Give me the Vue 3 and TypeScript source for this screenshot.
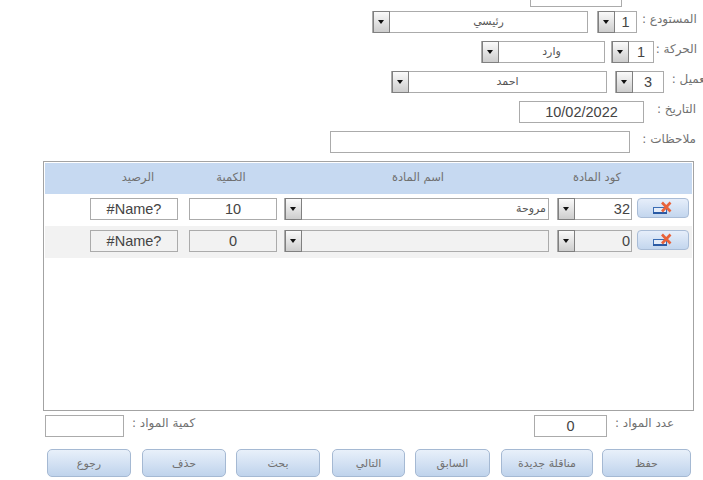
<script setup lang="ts">
interface Line {
  code: string
  name: string
  qty: string
  balance: string
}

const lines: Line[] = [
  { code: '32', name: 'مروحة', qty: '10', balance: '#Name?' },
  { code: '0', name: '', qty: '0', balance: '#Name?' }
]

// gap is the space to the previous button, they are not evenly placed
const buttons = [
  { text: 'رجوع', width: 84, gap: 0 },
  { text: 'حذف', width: 84, gap: 11 },
  { text: 'بحث', width: 84, gap: 10 },
  { text: 'التالي', width: 73, gap: 12 },
  { text: 'السابق', width: 75, gap: 10 },
  { text: 'مناقلة جديدة', width: 92, gap: 11 },
  { text: 'حفظ', width: 89, gap: 9 }
]
</script>

<template>
  <div class="page">
    <div class="row row-top">
      <div class="field top-field"></div>
    </div>

    <div class="row row-store">
      <div class="combo store-name">
        <span class="arrow"></span>
        <span class="combo-text center">رئيسي</span>
      </div>
      <div class="combo store-id">
        <span class="arrow"></span>
        <span class="combo-text center">1</span>
      </div>
      <span class="label store-label">المستودع :</span>
    </div>

    <div class="row row-move">
      <div class="combo move-name">
        <span class="arrow"></span>
        <span class="combo-text center">وارد</span>
      </div>
      <div class="combo move-id">
        <span class="arrow"></span>
        <span class="combo-text center">1</span>
      </div>
      <span class="label move-label">الحركة :</span>
    </div>

    <div class="row row-client">
      <div class="combo client-name">
        <span class="arrow"></span>
        <span class="combo-text center">احمد</span>
      </div>
      <div class="combo client-id">
        <span class="arrow"></span>
        <span class="combo-text center">3</span>
      </div>
      <span class="label client-label">العميل :</span>
    </div>

    <div class="row row-date">
      <div class="field date-field">10/02/2022</div>
      <span class="label date-label">التاريخ :</span>
    </div>

    <div class="row row-notes">
      <div class="field notes-field"></div>
      <span class="label notes-label">ملاحظات :</span>
    </div>

    <div class="table-box">
      <div class="table-head">
        <span class="col-balance">الرصيد</span>
        <span class="col-qty">الكمية</span>
        <span class="col-name">اسم المادة</span>
        <span class="col-code">كود المادة</span>
      </div>
      <div v-for="(line, i) in lines" :key="i" class="table-row" :class="{ alt: i === 1 }">
        <div class="field cell-balance">{{ line.balance }}</div>
        <div class="field cell-qty">{{ line.qty }}</div>
        <div class="combo cell-name">
          <span class="arrow"></span>
          <span class="combo-text name-text">{{ line.name }}</span>
        </div>
        <div class="combo cell-code">
          <span class="arrow"></span>
          <span class="combo-text code-text">{{ line.code }}</span>
        </div>
        <button class="del-btn" type="button" aria-label="delete">
          <svg width="20" height="14" viewBox="0 0 20 14">
            <rect x="0.5" y="6.5" width="13" height="6" fill="#e4ecf8" stroke="#3a6cb4" />
            <rect x="0" y="11" width="14" height="2" fill="#2a5aa4" />
            <path d="M9 1.5 L17.5 10.5 M17.5 1.5 L9 10.5" stroke="#e8623a" stroke-width="2.6" />
          </svg>
        </button>
      </div>
    </div>

    <div class="totals">
      <div class="field total-left"></div>
      <span class="label total-left-label">كمية المواد :</span>
      <div class="field total-right">0</div>
      <span class="label total-right-label">عدد المواد :</span>
    </div>

    <div class="actions">
      <button
        v-for="b in buttons"
        :key="b.text"
        class="action-btn"
        type="button"
        :style="{ width: b.width + 'px', marginLeft: b.gap + 'px' }"
      >
        {{ b.text }}
      </button>
    </div>
  </div>
</template>

<style>
html,
body {
  margin: 0;
  background: #fff;
  overflow: hidden;
}
</style>

<style scoped>
.page {
  width: 703px;
  height: 480px;
  overflow: hidden;
  background: #fff;
  font-family: "DejaVu Sans", sans-serif;
  color: #555;
  box-sizing: border-box;
}

.row {
  display: flex;
  align-items: center;
  height: 22px;
  margin-bottom: 8px;
  white-space: nowrap;
}

.row-top {
  height: 7px;
  margin-bottom: 4px;
  align-items: flex-end;
  padding-left: 530px;
}

.top-field {
  width: 92px;
  height: 7px;
  border-top: none;
}

.row-store {
  padding-left: 372px;
}

.row-move {
  padding-left: 481px;
}

.row-client {
  padding-left: 391px;
}

.row-date {
  padding-left: 519px;
}

.row-notes {
  padding-left: 330px;
}

.field,
.combo {
  box-sizing: border-box;
  height: 22px;
  border: 1px solid #ababab;
  background: #fff;
  font: 14.5px/20px "Liberation Sans", sans-serif;
  color: #444;
  flex: none;
}

.field {
  text-align: center;
}

.combo {
  display: flex;
  align-items: stretch;
}

.arrow {
  position: relative;
  box-sizing: border-box;
  width: 17px;
  flex: none;
  margin: -1px 0;
  border: 1px solid #808080;
  background: linear-gradient(#fafafa, #cdcdcd);
}

.arrow::after {
  content: "";
  position: absolute;
  left: 4px;
  top: 8px;
  border: 3.5px solid transparent;
  border-top: 4px solid #111;
  border-bottom: none;
}

.combo-text {
  flex: 1;
  min-width: 0;
}

.center {
  text-align: center;
}

.store-name .combo-text,
.move-name .combo-text,
.client-name .combo-text,
.name-text {
  font: 11px/19px "DejaVu Sans", sans-serif;
  color: #555;
}

.label {
  font-size: 12px;
  line-height: 16px;
  color: #707070;
  flex: none;
  direction: rtl;
}

.row .label {
  padding-bottom: 6px;
}

.store-name {
  width: 216px;
  margin-right: 9px;
}

.store-id {
  width: 40px;
}

.store-label {
  width: 55px;
  margin-left: 5px;
  text-align: left;
}

.move-name {
  width: 124px;
  margin-right: 6px;
}

.move-id {
  width: 43px;
}

.move-label {
  margin-left: 3px;
  width: 40px;
}

.client-name {
  width: 216px;
  margin-right: 8px;
}

.client-id {
  width: 49px;
}

.client-label {
  margin-left: 8px;
  width: 40px;
  text-align: right;
}

.date-field {
  width: 125px;
}

.date-label {
  margin-left: 10px;
  width: 42px;
}

.notes-field {
  width: 300px;
}

.notes-label {
  margin-left: 14px;
  width: 52px;
}

.table-box {
  box-sizing: border-box;
  width: 651px;
  height: 250px;
  margin-left: 43px;
  padding: 1px 1px 0 1px;
  border: 1px solid #a3a3a3;
}

.table-head {
  display: flex;
  height: 31px;
  background: #c6d9f1;
  font-size: 11.5px;
  line-height: 28px;
  color: #707070;
  text-align: center;
}

.col-balance {
  box-sizing: border-box;
  width: 142px;
  padding-left: 44px;
}

.col-qty {
  width: 88px;
}

.col-name {
  width: 286px;
}

.col-code {
  width: 72px;
}

.table-row {
  box-sizing: border-box;
  display: flex;
  align-items: flex-start;
  justify-content: flex-end;
  height: 32px;
  padding: 4px 3px 0 0;
}

.table-row.alt {
  background: #f2f2f2;
}

.table-row.alt .field,
.table-row.alt .combo {
  background: #f2f2f2;
}

.cell-balance {
  width: 88px;
  margin-right: 11px;
}

.cell-qty {
  width: 88px;
  margin-right: 7px;
}

.cell-name {
  width: 265px;
  margin-right: 8px;
}

.cell-code {
  width: 75px;
  margin-right: 5px;
}

.name-text {
  text-align: right;
  padding-right: 2px;
}

.code-text {
  text-align: right;
  padding-right: 1px;
}

.del-btn {
  box-sizing: border-box;
  display: flex;
  align-items: center;
  justify-content: center;
  width: 52px;
  height: 20px;
  padding: 0;
  border: 1px solid #a9bcd6;
  border-radius: 4px;
  background: linear-gradient(#e6eefa, #c3d6ee);
}

.totals {
  display: flex;
  align-items: flex-start;
  margin-top: 4px;
  height: 22px;
  padding-left: 45px;
}

.total-left {
  width: 79px;
}

.total-left-label {
  width: 72px;
  margin-left: 8px;
  text-align: left;
}

.total-right {
  width: 73px;
  margin-left: 330px;
}

.total-right-label {
  width: 60px;
  margin-left: 8px;
  text-align: left;
}

.actions {
  display: flex;
  margin-top: 12px;
  padding-left: 47px;
}

.action-btn {
  box-sizing: border-box;
  flex: none;
  height: 28px;
  padding: 0;
  border: 1px solid #a5b9d3;
  border-radius: 5px;
  background: linear-gradient(#e8f0fa, #bfd3ec);
  font: 11px "DejaVu Sans", sans-serif;
  color: #707070;
}
</style>
